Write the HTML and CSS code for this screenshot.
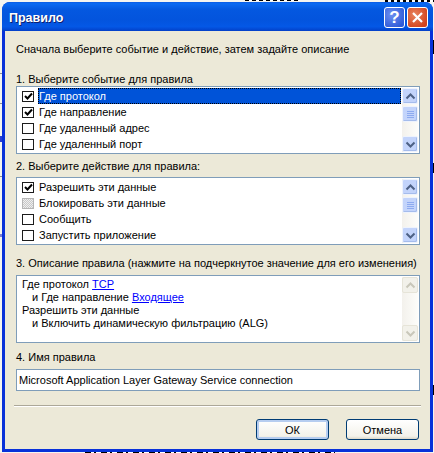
FILE: index.html
```html
<!DOCTYPE html>
<html lang="ru">
<head>
    <meta charset="UTF-8">
    <title>Правило</title>
    <link rel="stylesheet" href="styles.css">
</head>
<body>
    <div class="window">
        <div class="titlebar">
            <span class="title">Правило</span>
            <div class="title-button help">?</div>
            <div class="title-button close">
                <svg width="13" height="13" viewBox="0 0 13 13"><path d="M2 2L11 11M11 2L2 11" stroke="#fff" stroke-width="2.2" fill="none"/></svg>
            </div>
        </div>
        <div class="content">
            <p class="intro">Сначала выберите событие и действие, затем задайте описание</p>

            <p class="label label-first">1. Выберите событие для правила</p>
            <div class="box list-box">
                <div class="rows">
                    <div class="row selected">
                        <span class="check checked"><svg width="9" height="9" viewBox="0 0 9 9"><path d="M1 4L3.500 6.500L8 1.500" stroke="#000" stroke-width="2" fill="none"/></svg></span>
                        <span class="row-text">Где протокол</span>
                    </div>
                    <div class="row">
                        <span class="check checked"><svg width="9" height="9" viewBox="0 0 9 9"><path d="M1 4L3.500 6.500L8 1.500" stroke="#000" stroke-width="2" fill="none"/></svg></span>
                        <span class="row-text">Где направление</span>
                    </div>
                    <div class="row">
                        <span class="check"></span>
                        <span class="row-text">Где удаленный адрес</span>
                    </div>
                    <div class="row">
                        <span class="check"></span>
                        <span class="row-text">Где удаленный порт</span>
                    </div>
                </div>
                <div class="scrollbar">
                    <div class="sb-button"><svg width="11" height="7" viewBox="0 0 11 7"><path d="M1.500 5.500L5.500 1.500L9.500 5.500" stroke="#4d6185" stroke-width="2" fill="none"/></svg></div>
                    <div class="sb-thumb"><span></span><span></span><span></span><span></span></div>
                    <div class="sb-track"></div>
                    <div class="sb-button"><svg width="11" height="7" viewBox="0 0 11 7"><path d="M1.500 1.500L5.500 5.500L9.500 1.500" stroke="#4d6185" stroke-width="2" fill="none"/></svg></div>
                </div>
            </div>

            <p class="label label-second">2. Выберите действие для правила:</p>
            <div class="box list-box">
                <div class="rows">
                    <div class="row">
                        <span class="check checked"><svg width="9" height="9" viewBox="0 0 9 9"><path d="M1 4L3.500 6.500L8 1.500" stroke="#000" stroke-width="2" fill="none"/></svg></span>
                        <span class="row-text">Разрешить эти данные</span>
                    </div>
                    <div class="row">
                        <span class="check mixed"></span>
                        <span class="row-text">Блокировать эти данные</span>
                    </div>
                    <div class="row">
                        <span class="check"></span>
                        <span class="row-text">Сообщить</span>
                    </div>
                    <div class="row">
                        <span class="check"></span>
                        <span class="row-text">Запустить приложение</span>
                    </div>
                </div>
                <div class="scrollbar">
                    <div class="sb-button"><svg width="11" height="7" viewBox="0 0 11 7"><path d="M1.500 5.500L5.500 1.500L9.500 5.500" stroke="#4d6185" stroke-width="2" fill="none"/></svg></div>
                    <div class="sb-thumb"><span></span><span></span><span></span><span></span></div>
                    <div class="sb-track"></div>
                    <div class="sb-button"><svg width="11" height="7" viewBox="0 0 11 7"><path d="M1.500 1.500L5.500 5.500L9.500 1.500" stroke="#4d6185" stroke-width="2" fill="none"/></svg></div>
                </div>
            </div>

            <p class="label label-third">3. Описание правила (нажмите на подчеркнутое значение для его изменения)</p>
            <div class="box list-box">
                <div class="description">
                    <div>Где протокол <a href="#">TCP</a></div>
                    <div class="indent">и Где направление <a href="#">Входящее</a></div>
                    <div>Разрешить эти данные</div>
                    <div class="indent">и Включить динамическую фильтрацию (ALG)</div>
                </div>
                <div class="scrollbar">
                    <div class="sb-button disabled"><svg width="11" height="7" viewBox="0 0 11 7"><path d="M1.500 5.500L5.500 1.500L9.500 5.500" stroke="#c9c7ba" stroke-width="2" fill="none"/></svg></div>
                    <div class="sb-track"></div>
                    <div class="sb-button disabled"><svg width="11" height="7" viewBox="0 0 11 7"><path d="M1.500 1.500L5.500 5.500L9.500 1.500" stroke="#c9c7ba" stroke-width="2" fill="none"/></svg></div>
                </div>
            </div>

            <p class="label label-fourth">4. Имя правила</p>
            <div class="box name-input">Microsoft Application Layer Gateway Service connection</div>

            <div class="separator"></div>

            <div class="buttons">
                <button class="btn default">ОК</button>
                <button class="btn">Отмена</button>
            </div>
        </div>
    </div>
</body>
</html>
```

FILE: styles.css
```css
html, body {
    height: 100%;
}

body {
    margin: 0;
    padding: 2px 1px 1px 2px;
    box-sizing: border-box;
    overflow: hidden;
    font-family: "Liberation Sans", Arial, sans-serif;
    font-size: 11px;
    color: #000;
    background:
        linear-gradient(#000, #000) 433px 40px / 1px 14px no-repeat,
        linear-gradient(#000, #000) 433px 163px / 1px 10px no-repeat,
        linear-gradient(#000, #000) 433px 385px / 1px 10px no-repeat,
        linear-gradient(#2a3fd0, #2a3fd0) 0 136px / 2px 6px no-repeat,
        linear-gradient(#8f8f8f, #8f8f8f) 0 73px / 2px 1px no-repeat,
        linear-gradient(#8f8f8f, #8f8f8f) 0 103px / 2px 1px no-repeat,
        linear-gradient(#8f8f8f, #8f8f8f) 0 176px / 2px 1px no-repeat,
        linear-gradient(#7f7fd0, #7f7fd0) 0 234px / 2px 3px no-repeat,
        repeating-linear-gradient(90deg, #000 0 6px, #fff 6px 9px, #000 9px 11px, #fff 11px 16px) 85px 452px / 250px 1px no-repeat,
        repeating-linear-gradient(90deg, #000 0 3px, #fff 3px 6px) 385px 0 / 49px 2px no-repeat,
        repeating-linear-gradient(90deg, #000 0 4px, #fff 4px 7px) 245px 0 / 55px 1px no-repeat,
        #f4f4f0;
}

p {
    margin: 0;
}

.window {
    display: flex;
    flex-direction: column;
    height: 450px;
    background: #0831d9;
    border-radius: 8px 8px 0 0;
    overflow: hidden;
}

.titlebar {
    flex: none;
    display: flex;
    align-items: center;
    gap: 2px;
    height: 29px;
    padding: 2px 5px 0 7px;
    box-sizing: border-box;
    background: linear-gradient(#0a5be4 0, #0a6af2 6%, #0458e0 25%, #0354dd 60%, #0458e6 85%, #0340c8 100%);
}

.title {
    flex: 1;
    font-size: 12.500px;
    font-weight: bold;
    color: #fff;
    text-shadow: 1px 1px 0 #0f1f6f;
}

.title-button {
    display: flex;
    align-items: center;
    justify-content: center;
    width: 21px;
    height: 21px;
    box-sizing: border-box;
    border: 1px solid #fff;
    border-radius: 3px;
    color: #fff;
}

.help {
    font-size: 17px;
    font-weight: bold;
    background: radial-gradient(circle at 35% 35%, #6d8ff0, #2f5bd8 80%);
}

.close {
    background: radial-gradient(circle at 35% 35%, #e8845f, #d3421c 80%);
}

.content {
    flex: 1;
    margin: 0 3px 3px;
    padding: 11px 10px 0 11px;
    background: #ece9d8;
    min-height: 0;
}

.intro {
    line-height: 14px;
}

.label {
    line-height: 14px;
    white-space: nowrap;
}

.label-first {
    margin-top: 16px;
}

.label-second {
    margin: 5px 0 4px;
}

.label-third {
    margin: 11px 0 5px;
}

.label-fourth {
    margin: 7px 0 5px;
}

.box {
    box-sizing: border-box;
    border: 1px solid #7f9db9;
    background: #fff;
}

.list-box {
    display: flex;
    height: 68px;
    padding: 1px 1px 1px 0;
}

.rows {
    flex: 1;
    min-width: 0;
}

.row {
    display: flex;
    align-items: center;
    height: 16px;
}

.check {
    flex: none;
    display: flex;
    align-items: center;
    justify-content: center;
    width: 10px;
    height: 9px;
    margin-left: 5px;
    border: 1px solid #1c1c1c;
    background: #fff;
}

.mixed {
    border-color: #b5b5b5;
    background: repeating-conic-gradient(#c8c8c8 0 25%, #efefef 0 50%) 0 0 / 2px 2px;
}

.row-text {
    flex: 1;
    align-self: stretch;
    display: flex;
    align-items: center;
    margin-left: 4px;
    padding-left: 1px;
}

.selected .row-text {
    background: #0053d8;
    color: #fff;
    outline: 1px dotted #000;
    outline-offset: -1px;
}

.description {
    flex: 1;
    min-width: 0;
    padding: 1px 0 0 5px;
    line-height: 13px;
}

.indent {
    padding-left: 10px;
}

a {
    color: #0000ff;
}

.scrollbar {
    flex: none;
    display: flex;
    flex-direction: column;
    width: 16px;
    margin-left: 1px;
    background: linear-gradient(90deg, #f3f1ec, #fdfdfa);
}

.sb-button {
    flex: none;
    display: flex;
    align-items: center;
    justify-content: center;
    height: 16px;
    box-sizing: border-box;
    border: 1px solid #eef3fd;
    border-radius: 2px;
    background: #c3d4fb;
    box-shadow: inset -1px -1px 0 #a5bcec;
}

.sb-button.disabled {
    background: #f2f1ea;
    border-color: #e6e4d8;
    box-shadow: none;
}

.sb-thumb {
    flex: none;
    display: flex;
    flex-direction: column;
    align-items: center;
    justify-content: center;
    gap: 1px;
    height: 16px;
    margin-top: 2px;
    box-sizing: border-box;
    border: 1px solid #eef3fd;
    border-radius: 2px;
    background: #c3d4fb;
    box-shadow: inset -1px -1px 0 #a5bcec;
}

.sb-thumb span {
    width: 7px;
    height: 1px;
    background: #8daaf0;
}

.sb-track {
    flex: 1;
}

.name-input {
    display: flex;
    align-items: center;
    height: 22px;
    padding: 0 0 1px 2px;
}

.separator {
    height: 1px;
    margin: 14px -1px 0 -2px;
    background: #aca899;
    border-bottom: 1px solid #fff;
}

.buttons {
    display: flex;
    justify-content: flex-end;
    gap: 17px;
    margin-top: 12px;
    padding-right: 1px;
}

.btn {
    width: 73px;
    height: 21px;
    padding: 0;
    font: inherit;
    color: #000;
    border: 1px solid #003c74;
    border-radius: 3px;
    background: linear-gradient(#fff, #f3f2ea 85%, #dcd8c8);
}

.default {
    box-shadow: inset 0 0 0 2px #b6cdf0;
}
```
